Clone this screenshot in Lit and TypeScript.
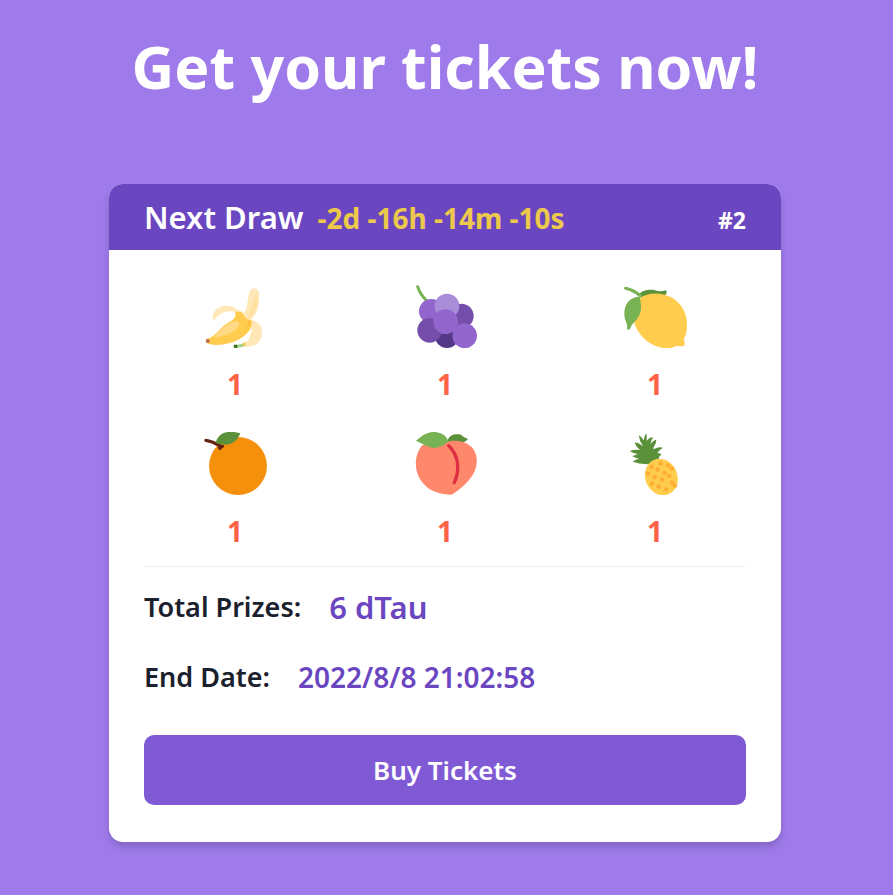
import { LitElement, html, svg, css } from "lit";
import { customElement } from "lit/decorators.js";

const banana = svg`
  <path fill="#FFE8B6" d="M144 102C160 85 156 58 163 38C168 24 181 20 189 31C197 46 192 76 184 96C178 109 171 116 168 119Q200 126 201 155C201 185 181 202 151 200Q143 198 146 190Q158 184 163 175L171 148L146 118Z"/>
  <path fill="#FFD983" opacity=".5" d="M184 45Q192 62 179 91Q173 106 164 114Q157 111 161 102Q174 83 178 57Q181 49 184 45Z"/>
  <path fill="#FFCC4D" d="M119 94Q140 87 146 105Q154 119 169 121L170 129C173 153 137 182 104 189Q70 199 42 192Q31 188 35 177C62 170 76 141 99 128Q116 120 120 112Q124 102 119 94Z"/>
  <path fill="#FFD983" d="M59 168C78 151 91 131 118 124Q137 123 132 138C120 157 87 171 59 172Z"/>
  <path fill="#FFE8B6" d="M53 115C52 96 66 80 91 77Q114 76 128 90Q138 92 141 97Q129 94 116 95C96 91 73 100 60 118Q55 121 53 115Z"/>
  <path fill="#FFAC33" opacity=".4" d="M163 118L169 126Q159 147 146 158Q160 138 163 118Z"/>
  <circle fill="#C1694F" cx="38" cy="183" r="6"/>
  <path fill="#A6D388" d="M123 195Q138 193 149 188L153 197Q140 203 125 203Z"/>
  <path fill="#FFCC4D" d="M145 188L153 185L150 193L154 198L145 197Z"/>
  <path fill="#3E721D" d="M117 194H127V204H118Q114 198 117 194Z"/>`;

const grapes = svg`
  <path fill="none" stroke="#77B255" stroke-width="9" stroke-linecap="round" d="M32 20Q39 43 58 61"/>
  <circle fill="#553788" cx="120" cy="168" r="36"/>
  <circle fill="#9266CC" cx="73" cy="94" r="37"/>
  <circle fill="#744EAA" cx="163" cy="108" r="37"/>
  <circle fill="#AA8DD8" cx="120" cy="78" r="37"/>
  <circle fill="#744EAA" cx="68" cy="151" r="37"/>
  <circle fill="#9266CC" cx="116" cy="125" r="37"/>
  <circle fill="#9266CC" cx="173" cy="167" r="37"/>`;

const lemon = svg`
  <path fill="#5C913B" d="M66 45C74 31 91 28 112 30Q131 37 145 31Q151 33 148 40Q145 50 125 55L76 57Z"/>
  <path fill="#FFCC4D" d="M70 54C91 36 137 35 168 55C199 76 210 105 210 134Q210 164 200 177Q204 188 202 197Q190 200 180 197Q156 210 125 201C87 192 48 149 49 106Q52 69 70 54Z"/>
  <path fill="#77B255" d="M68 50C74 78 76 98 57 121Q43 134 39 147Q34 152 30 146Q32 132 24 118C16 85 31 50 68 50Z"/>
  <path fill="none" stroke="#77B255" stroke-width="9" stroke-linecap="round" d="M26 25Q50 30 71 48"/>`;

const tangerine = svg`
  <circle fill="#F4900C" cx="129" cy="123" r="87"/>
  <path fill="#662113" d="M31 41Q57 44 75 58L86 61Q91 66 82 69Q79 75 74 75Q68 74 69 65Q51 53 30 50Q25 45 31 41Z"/>
  <path fill="#5C913B" d="M62 54C70 20 101 15 136 25C125 53 105 62 79 58Z"/>`;

const peach = svg`
  <path fill="#5C913B" d="M119 54C125 29 141 25 162 29Q169 37 183 42C171 57 151 57 137 55Z"/>
  <path fill="#FF886C" d="M120 51C143 42 178 48 197 69C215 92 212 127 197 150C183 173 160 192 138 207Q133 210 128 209C96 207 66 199 46 172C19 138 21 89 46 61Q81 47 120 51Z"/>
  <path fill="none" stroke="#DD2E44" stroke-width="10" stroke-linecap="round" d="M125 62C157 91 158 138 142 173"/>
  <path fill="#77B255" d="M27 47C49 28 65 20 84 21C108 23 120 36 124 49C104 68 85 72 69 67Q43 55 27 47Z"/>`;

const dots = [
  [104, 126], [131, 115], [153, 122], [93, 146], [122, 134], [143, 144],
  [165, 131], [113, 156], [135, 164], [156, 153], [174, 182], [105, 176],
  [125, 185], [147, 193], [165, 173],
];

const pineapple = svg`
  <path fill="#5C913B" d="M91 118Q65 116 47 110Q56 103 66 101Q48 97 47 93L63 87Q46 84 39 78Q51 72 69 75Q53 61 54 52Q66 54 78 64Q67 47 65 30Q75 36 80 46Q81 33 88 25Q90 36 89 47Q100 35 108 37Q102 48 100 58Q109 45 118 44Q118 54 112 62Q108 69 110 73Q124 64 138 68Q125 76 121 84Q132 84 133 89Q122 93 127 110Z"/>
  <ellipse fill="#FFCC4D" cx="133" cy="156" rx="48" ry="56" transform="rotate(-24 133 156)"/>
  <g fill="#FFAC33">
    ${dots.map(([x, y]) => svg`<rect x=${x - 6} y=${y - 6} width="12" height="12" rx="2" transform="rotate(20 ${x} ${y})"/>`)}
  </g>`;

const prizes = [
  { name: "Banana", art: banana, box: "27 15 189 189", count: 1 },
  { name: "Grapes", art: grapes, box: "21 15 189 189", count: 1 },
  { name: "Lemon", art: lemon, box: "21 15 189 189", count: 1 },
  { name: "Tangerine", art: tangerine, box: "27 21 189 189", count: 1 },
  { name: "Peach", art: peach, box: "21 21 189 189", count: 1 },
  { name: "Pineapple", art: pineapple, box: "21 21 189 189", count: 1 },
];

@customElement("app-root")
export class AppRoot extends LitElement {
  static styles = css`
    * { box-sizing: border-box; }
    :host {
      display: block;
      min-height: 100vh;
      padding: 24px 19px 53px 16px;
      box-sizing: border-box;
      background: #9f7aea;
      color: #1a202c;
      font-family: "Segoe UI", "Noto Sans", "Open Sans", sans-serif;
      font-weight: 600;
    }
    h1, h2, p, dl, dd, ul { margin: 0; padding: 0; }
    .title {
      color: #fff;
      font-size: 59px;
      font-weight: 700;
      line-height: 84px;
      text-align: center;
      margin-bottom: 76px;
    }
    .card {
      max-width: 672px;
      margin: 0 auto;
      border-radius: 14px;
      overflow: hidden;
      background: #fff;
      box-shadow: 0 7px 11px -2px rgba(0, 0, 0, 0.1), 0 4px 7px -1px rgba(0, 0, 0, 0.1);
    }
    .head {
      display: flex;
      align-items: baseline;
      gap: 14px;
      height: 66px;
      padding: 12px 35px;
      background: #6b46c1;
      color: #fff;
      line-height: 42px;
    }
    .head h2 { font-size: 31px; font-weight: 600; }
    .timer { color: #ecc94b; font-size: 28px; font-weight: 700; }
    .number { margin-left: auto; font-size: 23px; font-weight: 700; }
    .body { padding: 35px 21px 37px; }
    .prizes {
      display: grid;
      grid-template-columns: repeat(3, 1fr);
      row-gap: 27px;
      list-style: none;
      text-align: center;
    }
    .fruit { display: block; width: 63px; height: 63px; margin: 0 auto 15px; }
    .count { color: #ff6347; font-size: 28px; font-weight: 700; line-height: 42px; }
    .info { margin: 14px 14px 0; border-top: 1px solid #edf2f7; padding-top: 19px; }
    .row { display: flex; align-items: center; gap: 28px; line-height: 42px; font-size: 27px; }
    .row + .row { margin-top: 28px; }
    dd { color: #6b46c1; font-size: 28px; }
    .amount { font-size: 31px; }
    .buy {
      display: block;
      width: calc(100% - 28px);
      height: 70px;
      margin: 37px 14px 0;
      border: 0;
      border-radius: 10px;
      background: #805ad5;
      color: #fff;
      font: inherit;
      font-size: 26px;
      cursor: pointer;
    }
  `;

  render() {
    return html`
      <h1 class="title">Get your tickets now!</h1>
      <section class="card">
        <header class="head">
          <h2>Next Draw</h2>
          <p class="timer">-2d -16h -14m -10s</p>
          <p class="number">#2</p>
        </header>
        <div class="body">
          <ul class="prizes">
            ${prizes.map((p) => html`
              <li>
                <svg class="fruit" viewBox=${p.box} role="img" aria-label=${p.name}>${p.art}</svg>
                <p class="count">${p.count}</p>
              </li>`)}
          </ul>
          <dl class="info">
            <div class="row"><dt>Total Prizes:</dt><dd class="amount">6 dTau</dd></div>
            <div class="row"><dt>End Date:</dt><dd>2022/8/8 21:02:58</dd></div>
          </dl>
          <button class="buy" type="button">Buy Tickets</button>
        </div>
      </section>
    `;
  }
}
